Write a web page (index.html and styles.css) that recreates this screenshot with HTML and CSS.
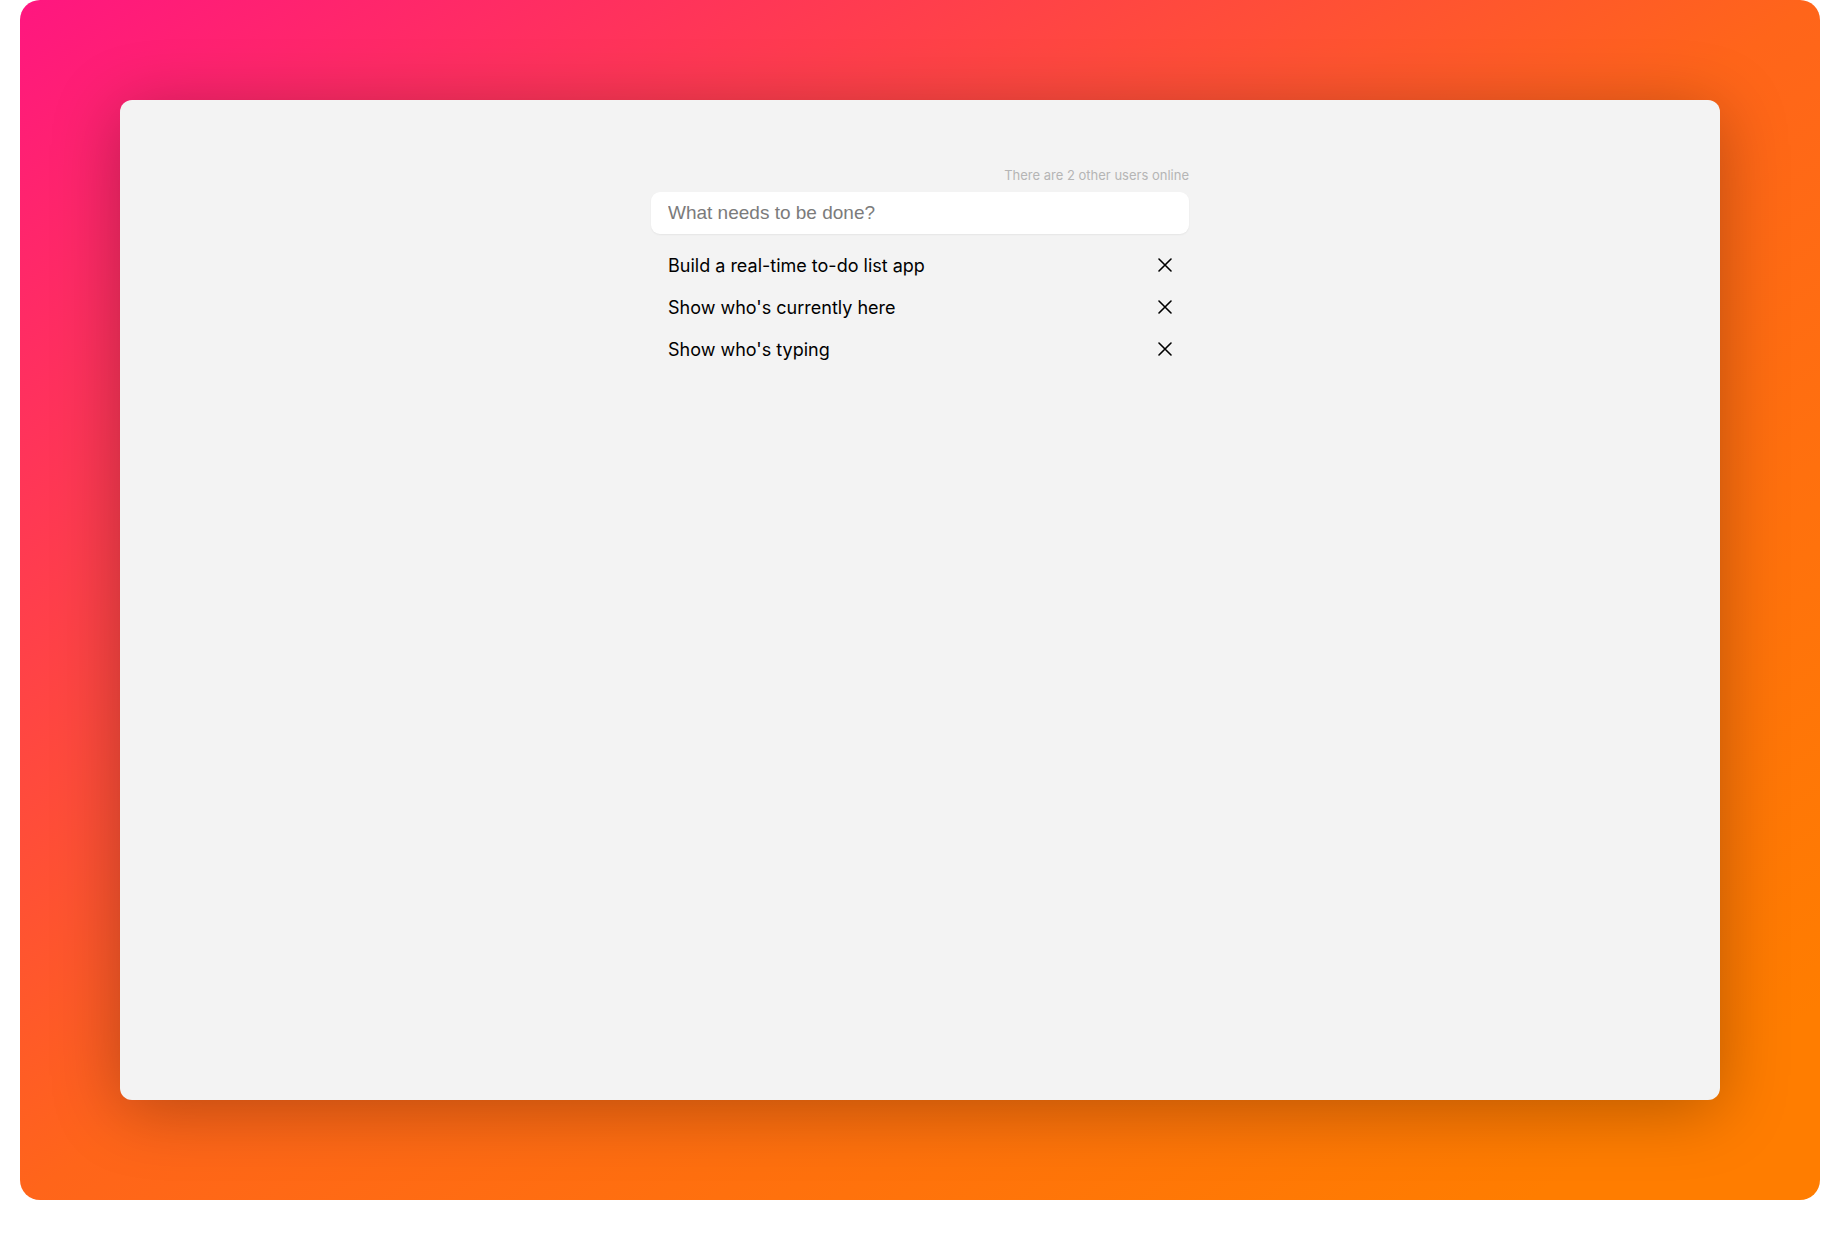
FILE: index.html
```html
<!DOCTYPE html>
<html lang="en">
<head>
<meta charset="utf-8">
<title>To-do list</title>
<link rel="stylesheet" href="styles.css">
</head>
<body>
<div class="backdrop">
  <main class="window">
    <div class="container">
      <div class="who-is-here">There are 2 other users online</div>
      <input class="new-todo" type="text" placeholder="What needs to be done?" aria-label="What needs to be done?">
      <ul class="todos">
        <li class="todo"><span>Build a real-time to-do list app</span><button class="delete" type="button" aria-label="Delete"><svg viewBox="0 0 14 14"><path d="M1 1l12 12M13 1L1 13"/></svg></button></li>
        <li class="todo"><span>Show who's currently here</span><button class="delete" type="button" aria-label="Delete"><svg viewBox="0 0 14 14"><path d="M1 1l12 12M13 1L1 13"/></svg></button></li>
        <li class="todo"><span>Show who's typing</span><button class="delete" type="button" aria-label="Delete"><svg viewBox="0 0 14 14"><path d="M1 1l12 12M13 1L1 13"/></svg></button></li>
      </ul>
    </div>
  </main>
</div>
</body>
</html>
```
FILE: styles.css
```css
* {
  box-sizing: border-box;
}

body {
  margin: 0;
  padding: 0 20px 40px;
  min-height: 100vh;
  display: flex;
  background: #fff;
  color: #000;
  font-family: Inter, "Liberation Sans", sans-serif;
}

.backdrop {
  flex: 1;
  display: flex;
  padding: 100px;
  border-radius: 20px;
  background: linear-gradient(to bottom right, #ff1680 0%, #ff651a 50%, #ff7d00 92%);
}

.window {
  flex: 1;
  padding: 64px 20px;
  border-radius: 12px;
  background: #f3f3f3;
  box-shadow: 0 10px 68px rgba(0, 0, 0, 0.28);
}

.container {
  max-width: 538px;
  margin: 0 auto;
}

.who-is-here {
  height: 28px;
  line-height: 22px;
  font-size: 13px;
  text-align: right;
  color: #b5b5b5;
}

.new-todo {
  display: block;
  width: 100%;
  height: 42px;
  padding: 0 17px;
  border: 0;
  border-radius: 9px;
  outline: 0;
  background: #fff;
  box-shadow: 0 1px 2px rgba(0, 0, 0, 0.06);
  font-family: "Liberation Sans", Arial, sans-serif;
  font-size: 19px;
  color: #000;
}

.new-todo::placeholder {
  color: #7b7b7b;
}

.todos {
  margin: 10px 0 0;
  padding: 0;
  list-style: none;
}

.todo {
  display: flex;
  align-items: center;
  justify-content: space-between;
  height: 42px;
  padding: 0 17px;
  font-size: 18px;
}

.delete {
  display: flex;
  padding: 0;
  border: 0;
  background: none;
  color: inherit;
}

.delete svg {
  width: 14px;
  height: 14px;
  fill: none;
  stroke: currentColor;
  stroke-width: 1.6;
  stroke-linecap: round;
}
```
